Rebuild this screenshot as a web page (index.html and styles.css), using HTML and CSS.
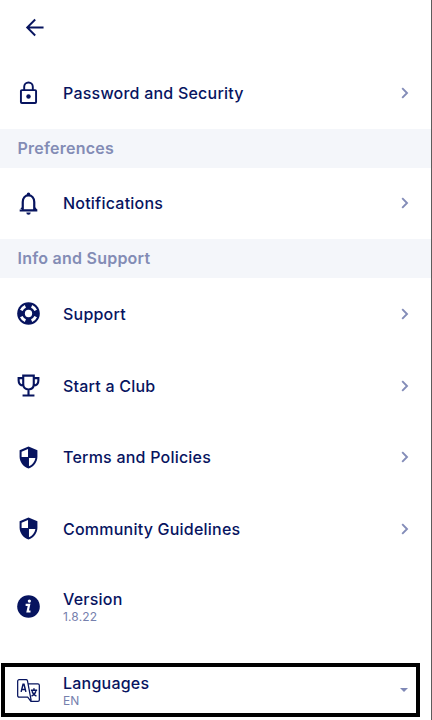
FILE: index.html
```
<!DOCTYPE html>
<html lang="en">
<head>
<meta charset="utf-8">
<title>Settings</title>
<link rel="stylesheet" href="styles.css">
</head>
<body>
<svg class="defs" aria-hidden="true">
  <symbol id="chevron" viewBox="0 0 8 12"><path d="M1.200 1.200 6 6 1.200 10.800" fill="none" stroke="currentColor" stroke-width="1.900"/></symbol>
  <symbol id="shield" viewBox="0 0 24 24"><path d="M12 .4 21.300 4.400V11c0 5.800-3.900 11-9.300 12.600C6.600 22 2.700 16.800 2.700 11V4.400Z" fill="currentColor"/><path d="M11.500 3.200V11.500H4.800V5.900ZM12.500 12.500H19.200C18.500 16.500 16 19.800 12.500 21.100Z" fill="#fff"/></symbol>
</svg>
<main class="screen">
  <header class="topbar">
    <svg class="back" viewBox="0 0 20 20"><path d="M19 10H2M10.200 1.600 1.800 10l8.400 8.400" fill="none" stroke="currentColor" stroke-width="2"/></svg>
  </header>
  <a class="row">
    <svg class="icon" viewBox="0 0 24 24"><rect x="4.100" y="9.500" width="15.800" height="13.400" rx="1" fill="none" stroke="currentColor" stroke-width="2"/><path d="M7.500 9.500V6a4.500 4.500 0 0 1 9 0v3.500" fill="none" stroke="currentColor" stroke-width="2"/><circle cx="12" cy="16.200" r="2.300" fill="currentColor"/></svg>
    <span class="label">Password and Security</span><svg class="chevron"><use href="#chevron"/></svg>
  </a>
  <h2 class="section">Preferences</h2>
  <a class="row">
    <svg class="icon" viewBox="0 0 24 24"><path d="M6 19V10.500C6 6.300 8.500 3.500 12 3.500s6 2.800 6 7V19" fill="none" stroke="currentColor" stroke-width="2.300"/><path d="M2.800 18h18.400v2.300H2.800ZM5 16 2.800 18.500h4.200ZM19 16l2.200 2.500h-4.200ZM9.700 21.500h4.600a2.300 2.300 0 0 1-4.600 0Z" fill="currentColor"/><circle cx="12" cy="2.300" r="1.800" fill="currentColor"/></svg>
    <span class="label">Notifications</span><svg class="chevron"><use href="#chevron"/></svg>
  </a>
  <h2 class="section">Info and Support</h2>
  <a class="row">
    <svg class="icon" viewBox="0 0 24 24"><circle cx="12" cy="12" r="11.800" fill="currentColor"/><g fill="none" stroke="#fff" stroke-width="3"><path d="M9 4.400a8.200 8.200 0 0 1 6 0M19.600 9a8.200 8.200 0 0 1 0 6M15 19.600a8.200 8.200 0 0 1-6 0M4.400 15a8.200 8.200 0 0 1 0-6" transform="rotate(45 12 12)"/></g><circle cx="12" cy="12" r="3.800" fill="#fff"/></svg>
    <span class="label">Support</span><svg class="chevron"><use href="#chevron"/></svg>
  </a>
  <a class="row">
    <svg class="icon" viewBox="0 0 24 24"><path d="M6.500 1.700h11v8.800c0 3.500-2.200 5.600-5.500 5.600s-5.500-2.100-5.500-5.600ZM6.500 4.300H1.700v2.500c0 3.300 2 5.200 5.200 5.200M17.500 4.300h4.800v2.500c0 3.300-2 5.200-5.200 5.200M12 16v6M5.800 22.400h12.400" fill="none" stroke="currentColor" stroke-width="2.200"/></svg>
    <span class="label">Start a Club</span><svg class="chevron"><use href="#chevron"/></svg>
  </a>
  <a class="row">
    <svg class="icon"><use href="#shield"/></svg>
    <span class="label">Terms and Policies</span><svg class="chevron"><use href="#chevron"/></svg>
  </a>
  <a class="row">
    <svg class="icon"><use href="#shield"/></svg>
    <span class="label">Community Guidelines</span><svg class="chevron"><use href="#chevron"/></svg>
  </a>
  <div class="row version">
    <svg class="icon" viewBox="0 0 24 24"><circle cx="12" cy="12" r="11.800" fill="currentColor"/><circle cx="12.900" cy="6.300" r="1.700" fill="#fff"/><path d="M9 10.200h3.600l-1.500 7h3" fill="none" stroke="#fff" stroke-width="2.300"/></svg>
    <span class="label">Version<small>1.8.22</small></span>
  </div>
  <div class="row languages">
    <svg class="icon" viewBox="0 0 24 24"><g fill="none" stroke="currentColor" stroke-width="1.300"><path d="M11.500 19H2.200A1.500 1.500 0 0 1 .7 17.500V2.200A1.500 1.500 0 0 1 2.200.7h7.300a1.500 1.500 0 0 1 1.400 1L14.800 22.500M11.900 5h9.900a1.500 1.500 0 0 1 1.500 1.500v15.300a1.500 1.500 0 0 1-1.500 1.500h-7.300L11.200 19"/><path d="M4.300 13.500 6.300 5.500h1L9.300 13.500M4.900 11h3.800" stroke-width="1.500"/><path d="M14.500 11.800h6.500M17.700 9.700v2M15.700 12.700c.6 2.500 2.300 4.200 4.600 5.200M19.700 12.700c-.6 2.500-2.300 4.200-4.600 5.200" stroke-width="1.500"/></g></svg>
    <span class="label">Languages<small>EN</small></span>
    <svg class="caret" viewBox="0 0 8 4"><path d="M0 0h8L4 4Z" fill="currentColor"/></svg>
  </div>
</main>
</body>
</html>
```
FILE: styles.css
```
* { box-sizing: border-box; }
body { margin: 0; background: #fff; color: #07145f; font-family: Inter, "Liberation Sans", sans-serif; }
.defs { display: none; }
.screen { width: 432px; height: 720px; overflow: hidden; border-right: 1px solid #5c5c5c; display: flex; flex-direction: column; }
.topbar { height: 57px; flex: none; padding: 18px 0 0 25px; }
.back { display: block; width: 20px; height: 19px; }
.row { height: 71.600px; flex: none; display: flex; align-items: center; padding: 0 22.500px 0 17px; }
.icon { width: 23px; height: 23px; margin-right: 23px; flex: none; }
.label { flex: 1; font-size: 16px; line-height: 20px; font-weight: 500; letter-spacing: .22px; }
.label small { display: block; font-size: 12px; line-height: 15px; font-weight: 400; letter-spacing: .15px; color: #7680ad; }
.chevron { width: 8px; height: 12px; color: #838cb8; }
.section { height: 39px; flex: none; margin: 0; padding-left: 17.500px; background: #f4f6fa; color: #838cb5; font-size: 16px; line-height: 39px; font-weight: 600; letter-spacing: .24px; }
.version { height: 84px; }
.languages { height: 54px; width: 419px; margin: 14px 0 0 1px; border: 4px solid #000; padding: 1px 8px 0 12px; }
.caret { width: 8px; height: 4px; color: #7f88b6; }
```
